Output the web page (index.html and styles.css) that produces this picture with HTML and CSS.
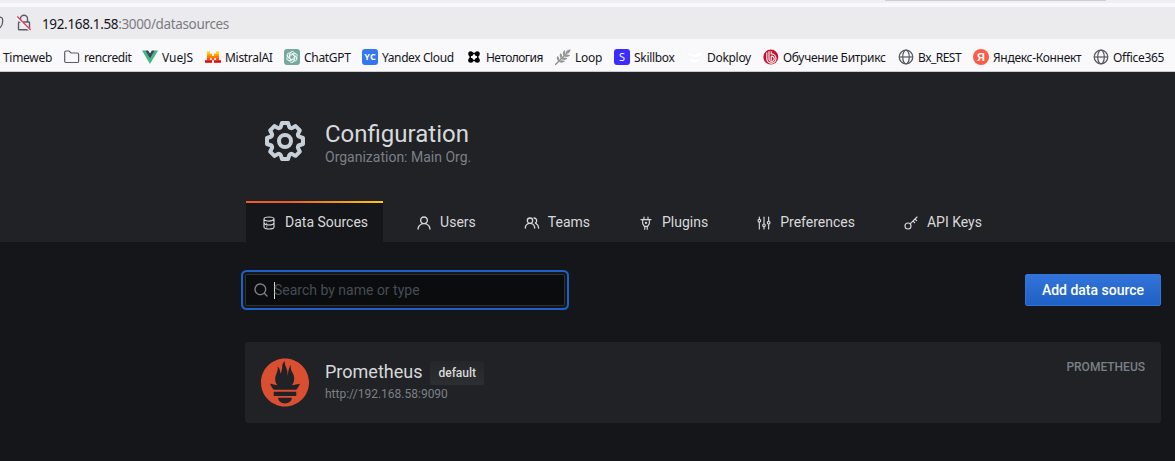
FILE: index.html
```html
<!DOCTYPE html>
<html lang="en">
<head>
<meta charset="utf-8">
<title>Configuration: Data Sources</title>
<link rel="stylesheet" href="styles.css">
</head>
<body>
<div class="browser">
  <div class="tabstrip"><div class="tab-edge"></div></div>
  <div class="urlbar">
    <svg class="shield" width="6" height="16" viewBox="0 0 6 16"><path d="M0 2.200C1.200 2.200 2.600 3 2.600 4.500V7C2.600 9.500 1.300 11.500 0 12.700" fill="none" stroke="#5b5b66" stroke-width="1.300"/></svg>
    <svg class="lock" width="16" height="18" viewBox="0 0 16 18"><path d="M4.500 8V4.800a3.500 3.500 0 0 1 7 0V8M3.200 8h9.600q.7 0 .7.700v6.300q0 .8-.8.800H3.300q-.8 0-.8-.8V8.700q0-.7.7-.7z" fill="none" stroke="#5b5b66" stroke-width="1.400"/><path d="M.7 3.200 14.300 16.300" stroke="#f9f9fb" stroke-width="2.400"/><path d="M1.300 2.500 14.700 16" stroke="#e8335c" stroke-width="1.300"/></svg>
    <span class="url"><b>192.168.1.58</b>:3000/datasources</span>
  </div>
  <div class="bookmarks">
    <div class="bm"><span>Timeweb</span></div>
    <div class="bm"><svg width="16" height="16" viewBox="0 0 16 16"><path d="M.7 12.300V3.200Q.7 2 1.900 2H5l2 2h6.300q1.300 0 1.300 1.300v7q0 1.200-1.200 1.200H1.900Q.7 13.500.7 12.300z" fill="none" stroke="#5b5b66" stroke-width="1.200"/></svg><span class="tight">rencredit</span></div>
    <div class="bm"><svg width="16" height="16" viewBox="0 0 16 16"><path d="M0 1.500h3.200L8 9.700l4.800-8.200H16L8 15z" fill="#41b883"/><path d="M3.200 1.500H6.200L8 4.500l1.800-3h3L8 9.700z" fill="#35495e"/></svg><span class="wide">VueJS</span></div>
    <div class="bm"><svg width="16" height="16" viewBox="0 0 16 16"><path d="M2 2.500h3v2.200H2zM11 2.500h3v2.200h-3z" fill="#ffcf00"/><path d="M2 4.700h5v2.200H2zM9 4.700h5v2.200H9z" fill="#ffa300"/><path d="M2 6.900h12v2.200H2z" fill="#ff7a00"/><path d="M2 9.100h3v2.200H2zM6.700 9.100h2.600v2.200H6.700zM11 9.100h3v2.200h-3z" fill="#fa500f"/><path d="M0 11.300h7v2.400H0zM9 11.300h7v2.400H9z" fill="#e10500"/></svg><span>MistralAI</span></div>
    <div class="bm"><svg width="16" height="16" viewBox="0 0 16 16"><rect width="16" height="16" rx="3" fill="#74aa9c"/><g fill="none" stroke="#fff" stroke-width=".8"><path id="petal" d="M6.100 8V4.600a2.200 2.200 0 0 1 4-1.200M6.100 6l3-1.700a2.300 2.300 0 0 1 3 1"/><use href="#petal" transform="rotate(60 8 8)"/><use href="#petal" transform="rotate(120 8 8)"/><use href="#petal" transform="rotate(180 8 8)"/><use href="#petal" transform="rotate(240 8 8)"/><use href="#petal" transform="rotate(300 8 8)"/></g></svg><span>ChatGPT</span></div>
    <div class="bm"><span class="fav yc">YC</span><span class="tight">Yandex Cloud</span></div>
    <div class="bm"><svg width="16" height="16" viewBox="0 0 16 16"><rect x="4.200" y="4.500" width="7.600" height="7" fill="none" stroke="#000" stroke-width="1.500"/><circle cx="4.700" cy="4.700" r="2.500"/><circle cx="11.300" cy="4.700" r="2.500"/><circle cx="4.700" cy="11.300" r="2.500"/><circle cx="11.300" cy="11.300" r="2.500"/></svg><span class="tighter">Нетология</span></div>
    <div class="bm"><svg width="16" height="16" viewBox="0 0 16 16"><path d="M0 16 12 4" stroke="#8d8d8d" stroke-width="1.300"/><g fill="#969696"><path d="M11 5Q10 1.500 15.500.3 15.500 4.500 11 5zM8.800 7Q6.500 4 9.500 1 11.500 4 8.800 7zM6 9.700Q3.500 7 5.700 4 8.300 6.500 6 9.700zM3.500 12.300Q.7 10 2.500 7 5.300 9 3.500 12.300z"/><path d="M9 7Q12 9.500 15.300 6.300 12 4.400 9 7zM6.300 9.800Q9.500 12.300 12.500 9.500 9.500 7.500 6.300 9.800zM3.700 12.500Q7 15 10 12.300 7 10.200 3.700 12.500z"/></g></svg><span>Loop</span></div>
    <div class="bm"><span class="fav skill">S</span><span>Skillbox</span></div>
    <div class="bm"><svg width="16" height="16" viewBox="0 0 16 16"><path d="M.5 3q4 4 10 1l4-2q2 3-1 5-6 3-13-1zM1 8q6 4 13 1-1 5-7 5Q2 13 1 8z" fill="#fff" stroke="#f3f3f6" stroke-width=".5"/></svg><span>Dokploy</span></div>
    <div class="bm"><svg width="16" height="16" viewBox="0 0 16 16"><circle cx="7.800" cy="8" r="7.500" fill="#c8102e"/><g fill="none" stroke="#fff" stroke-width="1.100"><path d="M6 2.200v7.300a2.600 2.600 0 1 0 2.200-2.300M8.200 2.200v2.700a4.600 4.600 0 1 1-4.400 5V3.500M8.200 7.200v4"/></g></svg><span>Обучение Битрикс</span></div>
    <div class="bm"><svg width="16" height="16" viewBox="0 0 16 16"><g fill="none" stroke="#5b5b66" stroke-width="1.250"><circle cx="8" cy="8" r="6.800"/><ellipse cx="8" cy="8" rx="3.300" ry="6.800"/><path d="M1.200 8h13.600"/></g></svg><span class="tighter">Bx_REST</span></div>
    <div class="bm"><span class="fav ya">Я</span><span>Яндекс-Коннект</span></div>
    <div class="bm"><svg width="16" height="16" viewBox="0 0 16 16"><g fill="none" stroke="#5b5b66" stroke-width="1.250"><circle cx="8" cy="8" r="6.800"/><ellipse cx="8" cy="8" rx="3.300" ry="6.800"/><path d="M1.200 8h13.600"/></g></svg><span>Office365</span></div>
  </div>
</div>

<header class="page-header">
  <div class="title-row">
    <svg class="cog" width="48" height="48" viewBox="0 0 24 24"><path d="M21.320,9.550l-1.890-.63.890-1.780A1,1,0,0,0,20.130,6L18,3.870a1,1,0,0,0-1.150-.19l-1.780.89-.63-1.890A1,1,0,0,0,13.500,2h-3a1,1,0,0,0-.95.680L8.920,4.570,7.140,3.680A1,1,0,0,0,6,3.870L3.870,6a1,1,0,0,0-.19,1.150l.89,1.780-1.890.63A1,1,0,0,0,2,10.500v3a1,1,0,0,0,.68.950l1.890.63-.89,1.780A1,1,0,0,0,3.870,18L6,20.130a1,1,0,0,0,1.150.19l1.780-.89.63,1.890a1,1,0,0,0,.95.680h3a1,1,0,0,0,.95-.68l.63-1.890,1.780.89A1,1,0,0,0,18,20.130L20.130,18a1,1,0,0,0,.19-1.150l-.89-1.780,1.890-.63A1,1,0,0,0,22,13.500v-3A1,1,0,0,0,21.320,9.550ZM20,12.780l-1.200.4A2,2,0,0,0,17.640,16l.57,1.140-1.100,1.100L16,17.640a2,2,0,0,0-2.790,1.160l-.4,1.200H11.220l-.4-1.200A2,2,0,0,0,8,17.640l-1.140.57-1.100-1.100L6.360,16A2,2,0,0,0,5.200,13.180L4,12.780V11.220l1.200-.4A2,2,0,0,0,6.360,8L5.790,6.890l1.100-1.100L8,6.360A2,2,0,0,0,10.820,5.200l.4-1.200h1.560l.4,1.200A2,2,0,0,0,16,6.360l1.140-.57,1.100,1.100L17.640,8a2,2,0,0,0,1.160,2.790l1.200.4ZM12,8a4,4,0,1,0,4,4A4,4,0,0,0,12,8Zm0,6a2,2,0,1,1,2-2A2,2,0,0,1,12,14Z"/></svg>
    <div>
      <h1>Configuration</h1>
      <div class="sub">Organization: Main Org.</div>
    </div>
  </div>
  <nav class="tabs">
    <a class="tab active"><svg class="line" viewBox="0 0 24 24"><path d="M4.500 6C4.500 4 8 3 12 3s7.500 1 7.500 3v12c0 2-3.500 3-7.500 3s-7.500-1-7.500-3zM4.500 6.500c1 2 4 2.700 7.500 2.700s6.500-.7 7.500-2.700M4.500 12c1 2.200 4 3 7.500 3s6.500-.8 7.500-3M8.500 12.300h.1M8.500 17.800h.1"/></svg>Data Sources</a>
    <a class="tab"><svg viewBox="0 0 24 24"><path d="M15.710,12.710a6,6,0,1,0-7.420,0,10,10,0,0,0-6.220,8.180,1,1,0,0,0,2,.22,8,8,0,0,1,15.900,0,1,1,0,0,0,1,.89h.11a1,1,0,0,0,.88-1.100A10,10,0,0,0,15.710,12.710ZM12,12a4,4,0,1,1,4-4A4,4,0,0,1,12,12Z"/></svg>Users</a>
    <a class="tab"><svg viewBox="0 0 24 24"><path d="M12.300,12.220A4.920,4.920,0,0,0,14,8.500a5,5,0,0,0-10,0,4.920,4.920,0,0,0,1.700,3.720A8,8,0,0,0,1,19.500a1,1,0,0,0,2,0,6,6,0,0,1,12,0,1,1,0,0,0,2,0A8,8,0,0,0,12.300,12.220ZM9,11.500a3,3,0,1,1,3-3A3,3,0,0,1,9,11.500Zm9.740.32A5,5,0,0,0,15,3.500a1,1,0,0,0,0,2,3,3,0,0,1,3,3,3,3,0,0,1-1.500,2.590,1,1,0,0,0-.5.840,1,1,0,0,0,.45.860l.39.260.13.070a7,7,0,0,1,4,6.380,1,1,0,0,0,2,0A9,9,0,0,0,18.740,11.820Z"/></svg>Teams</a>
    <a class="tab"><svg class="line" viewBox="0 0 24 24"><path d="M4.500 7h15M9 7V3M15 7V3M7 7v6l2.500 4h5l2.500-4V7M10.200 17v4.500M13.800 17v4.500"/><circle cx="12" cy="11.800" r=".9"/></svg>Plugins</a>
    <a class="tab"><svg class="line" viewBox="0 0 24 24"><path d="M5 3v3M5 11v10M12 3v10M12 18v3M19 3v6M19 14v7"/><circle cx="5" cy="8.500" r="2"/><circle cx="12" cy="15.500" r="2"/><circle cx="19" cy="11.500" r="2"/></svg>Preferences</a>
    <a class="tab"><svg class="line" viewBox="0 0 24 24"><circle cx="7.500" cy="16.500" r="4.500"/><path d="M10.700 13.300 21 3M15 9l2.500 2.500M18 6l2.500 2.500"/></svg>API Keys</a>
  </nav>
</header>

<main class="content">
  <div class="actions">
    <div class="search"><svg width="16" height="16" viewBox="0 0 24 24"><path d="M21.710,20.290,18,16.610A9,9,0,1,0,16.610,18l3.680,3.680a1,1,0,0,0,1.420,0A1,1,0,0,0,21.710,20.290ZM11,18a7,7,0,1,1,7-7A7,7,0,0,1,11,18Z"/></svg><span class="caret"></span><span class="placeholder">Search by name or type</span></div>
    <div class="button">Add data source</div>
  </div>
  <section class="card">
    <svg width="48" height="49" viewBox="0 0 24 24"><path fill="#da4e31" d="M12 0C5.373 0 0 5.372 0 12c0 6.627 5.373 12 12 12s12-5.373 12-12c0-6.628-5.373-12-12-12zm0 22.460c-1.885 0-3.414-1.260-3.414-2.814h6.828c0 1.553-1.528 2.813-3.414 2.813zm5.640-3.745H6.360v-2.046h11.280v2.046zm-.04-3.098H6.391c-.037-.043-.075-.086-.111-.13-1.155-1.401-1.427-2.133-1.690-2.879-.005-.025 1.400.287 2.395.511 0 0 .513.119 1.262.255-.72-.843-1.147-1.915-1.147-3.010 0-2.406 1.845-4.508 1.180-6.207.648.053 1.340 1.367 1.387 3.422.689-.951.977-2.690.977-3.755 0-1.103.727-2.385 1.454-2.429-.648 1.069.168 1.984.894 4.256.272.854.237 2.290.447 3.201.07-1.892.395-4.652 1.595-5.605-.529 1.200.079 2.702.494 3.424.671 1.164 1.078 2.047 1.078 3.716a4.642 4.642 0 0 1-1.110 2.996c.792-.149 1.340-.283 1.340-.283l2.573-.502s-.374 1.538-1.810 3.019z"/></svg>
    <div class="info">
      <div class="name"><span class="label">Prometheus</span><span class="badge">default</span></div>
      <div class="addr">http://192.168.58:9090</div>
    </div>
    <div class="type">PROMETHEUS</div>
  </section>
</main>
</body>
</html>
```

FILE: styles.css
```css
* { box-sizing: border-box; }
body { margin: 0; width: 1175px; height: 461px; overflow: hidden; background: #141619; color: #c7d0d9; font: 14px/20px Roboto, sans-serif; }
svg { display: block; flex: none; }

.browser { height: 72px; background: #f9f9fb; border-bottom: 1px solid #cccccf; color: #15141a; font-family: "Noto Sans", "Open Sans", sans-serif; }
.tabstrip { height: 3px; background: #f0f0f4; }
.tab-edge { width: 221px; height: 1px; margin-left: 885px; background: #cfcfd3; }
.urlbar { height: 32px; margin-top: 4px; display: flex; align-items: center; background: #ebebee; font-size: 13.500px; color: #7b7b80; }
.shield { width: 6px; margin-right: 10px; }
.lock { margin-right: 10px; }
.url { padding-top: 2px; letter-spacing: -0.35px; white-space: nowrap; }
.url b { font-weight: 400; color: #15141a; }
.bookmarks { height: 32px; padding: 4px 0 0 3px; display: grid; align-items: center; grid-template-columns: 61px 78px 63px 79px 78px 104px 89px 59px 73px 76px 135px 75px 120px 82px; font-size: 12px; line-height: 16px; }
.bm { display: flex; align-items: center; gap: 4px; white-space: nowrap; letter-spacing: -0.3px; }
.bm span:last-child { padding-top: 2px; }
.bm .tight { letter-spacing: -0.4px; }
.bm .tighter { letter-spacing: -0.55px; }
.bm .wide { letter-spacing: 0; }
.fav { width: 16px; height: 16px; flex: none; text-align: center; color: #fff; letter-spacing: 0; }
.yc { border-radius: 3px; background: #3577f1; font: 700 9px/16px "Open Sans", sans-serif; }
.skill { border-radius: 3px; background: #3d2cff; font-size: 11px; line-height: 16px; }
.ya { border-radius: 50%; background: #fc5b45; font: 700 11px/16px "Liberation Sans", sans-serif; }

.page-header { height: 170px; padding: 45px 14px 0 246px; background: #202226; display: flex; flex-direction: column; }
.title-row { height: 84px; display: flex; gap: 16px; padding-left: 15px; }
.cog { fill: #c7d0d9; }
h1 { margin: 3px 0 0; font: 400 24px/28px Roboto, sans-serif; color: #d8d9da; }
.sub { color: #7b8087; line-height: 18px; }
.tabs { display: flex; gap: 18px; }
.tab { height: 41px; padding: 1px 15px 0; display: flex; align-items: center; gap: 8px; color: #d8d9da; }
.tab svg { width: 16px; height: 16px; fill: currentColor; margin-top: 1px; }
.tab .line, .tab .line circle { fill: none; stroke: currentColor; stroke-width: 1.700; stroke-linecap: round; stroke-linejoin: round; }
.active { padding-top: 0; padding-bottom: 1px; border-top: 2px solid; border-image: linear-gradient(90deg, #f05a28 30%, #fbca0a 99%) 1; background: #141619; }

.content { padding: 32px 14px 0 245px; }
.actions { display: flex; justify-content: space-between; height: 32px; }
.search { width: 320px; height: 32px; padding-left: 7px; display: flex; align-items: center; background: #0b0c0e; border: 1px solid #2c3235; border-radius: 2px; box-shadow: 0 0 0 2px #141619, 0 0 0 4px #1f60c4; color: #464c54; }
.search svg { fill: #7b8087; }
.caret { width: 1px; height: 17px; margin-left: 5px; background: #d8d9da; }
.placeholder { margin-left: -1px; }
.button { width: 136px; height: 32px; border: 1px solid #3274d9; border-radius: 2px; background: linear-gradient(#3274d9, #1f60c4); color: #fff; font-weight: 500; line-height: 30px; text-align: center; }
.card { margin-top: 36px; height: 81px; padding: 16px; display: flex; gap: 16px; background: #202226; border-radius: 3px; }
.info { flex: 1; }
.name { height: 26px; margin-top: 2px; display: flex; align-items: center; gap: 8px; font-size: 18px; color: #d8d9da; }
.label { padding-bottom: 2px; }
.badge { height: 24px; padding: 0 8px; border-radius: 2px; background: linear-gradient(#242629, #2c2e31); font-size: 12px; font-weight: 500; line-height: 24px; }
.addr { font-size: 12px; line-height: 16px; color: #7b8087; }
.type { font-size: 12px; font-weight: 500; line-height: 19px; color: #7b8087; }
```
